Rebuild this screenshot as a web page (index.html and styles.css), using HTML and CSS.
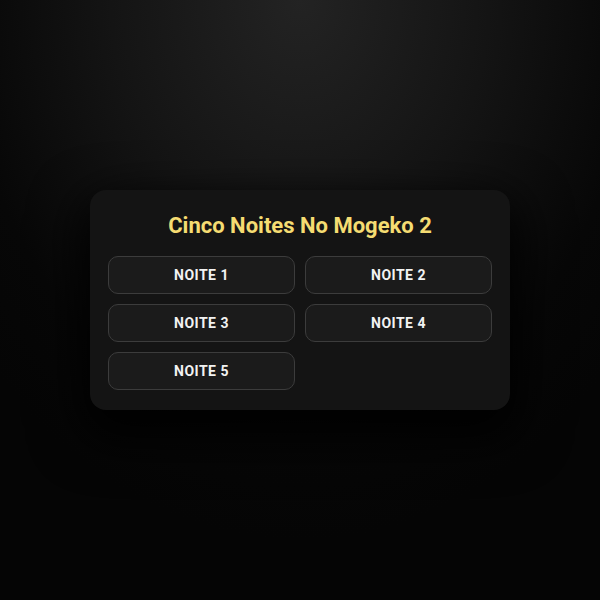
FILE: index.html
```html
<!DOCTYPE html>
<html lang="pt">
<head>
<meta charset="utf-8">
<title>Cinco Noites No Mogeko 2</title>
<link rel="stylesheet" href="styles.css">
</head>
<body>
  <main class="menu">
    <h1 class="menu-title">Cinco Noites No Mogeko 2</h1>
    <div class="nights">
      <button class="night">NOITE 1</button>
      <button class="night">NOITE 2</button>
      <button class="night">NOITE 3</button>
      <button class="night">NOITE 4</button>
      <button class="night">NOITE 5</button>
    </div>
  </main>
</body>
</html>
```
FILE: styles.css
```css
html, body {
  margin: 0;
  height: 100%;
}

body {
  display: flex;
  align-items: center;
  justify-content: center;
  background: radial-gradient(ellipse 70% 90% at 50% 0%, #232323 0%, #141414 45%, #070707 80%, #050505 100%);
  background-color: #050505;
  font-family: Roboto, "Liberation Sans", sans-serif;
}

.menu {
  width: 420px;
  box-sizing: border-box;
  padding: 22px 18px 20px;
  background: #141414;
  border-radius: 16px;
  box-shadow: 0 20px 50px 10px rgba(0, 0, 0, 0.95);
}

.menu-title {
  margin: 0 0 16px;
  text-align: center;
  font-size: 22px;
  line-height: 28px;
  font-weight: 700;
  color: #f5dc72;
}

.nights {
  display: grid;
  grid-template-columns: 1fr 1fr;
  gap: 10px;
}

.night {
  height: 38px;
  background: #1b1b1b;
  border: 1px solid #3c3c3c;
  border-radius: 10px;
  color: #f2f2f2;
  font-family: inherit;
  font-size: 14px;
  font-weight: 700;
  letter-spacing: 0.5px;
  cursor: pointer;
}
```
